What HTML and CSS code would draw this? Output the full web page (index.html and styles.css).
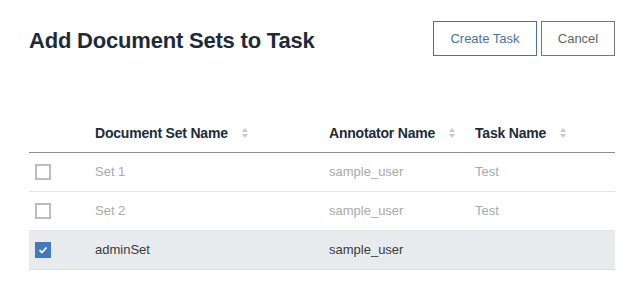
FILE: index.html
```html
<!DOCTYPE html>
<html lang="en">
<head>
    <meta charset="UTF-8">
    <title>Add Document Sets to Task</title>
    <link rel="stylesheet" href="styles.css">
</head>
<body>
    <div class="dialog">
        <div class="dialog-header">
            <h1>Add Document Sets to Task</h1>
            <div class="actions">
                <button class="btn btn-primary">Create Task</button>
                <button class="btn btn-secondary">Cancel</button>
            </div>
        </div>

        <table class="sets-table">
            <thead>
                <tr>
                    <th class="col-check"></th>
                    <th class="col-name"><span>Document Set Name</span><i class="sort"></i></th>
                    <th class="col-annotator"><span>Annotator Name</span><i class="sort"></i></th>
                    <th class="col-task"><span>Task Name</span><i class="sort"></i></th>
                </tr>
            </thead>
            <tbody>
                <tr class="muted">
                    <td><span class="checkbox"></span></td>
                    <td>Set 1</td>
                    <td>sample_user</td>
                    <td>Test</td>
                </tr>
                <tr class="muted">
                    <td><span class="checkbox"></span></td>
                    <td>Set 2</td>
                    <td>sample_user</td>
                    <td>Test</td>
                </tr>
                <tr class="selected">
                    <td>
                        <span class="checkbox checked">
                            <svg width="10" height="8" viewBox="0 0 10 8"><path d="M1.5 4.2 L4 6.5 L8.5 1.5" fill="none" stroke="#fff" stroke-width="1.8"/></svg>
                        </span>
                    </td>
                    <td>adminSet</td>
                    <td>sample_user</td>
                    <td></td>
                </tr>
            </tbody>
        </table>
    </div>
</body>
</html>
```

FILE: styles.css
```css
* {
    margin: 0;
    padding: 0;
    box-sizing: border-box;
}

body {
    font-family: "Liberation Sans", Arial, sans-serif;
    background: #fff;
    color: #152935;
}

.dialog {
    padding: 21px 28px 0 29px;
}

.dialog-header {
    display: flex;
    justify-content: space-between;
    align-items: flex-start;
}

h1 {
    font-size: 22px;
    font-weight: 600;
    color: #1c2b39;
    margin-top: 7px;
    letter-spacing: -0.2px;
}

.actions {
    display: flex;
    gap: 4px;
}

.btn {
    height: 35px;
    background: #fff;
    font-family: "Liberation Sans", Arial, sans-serif;
    font-size: 13px;
    padding: 0 12px;
    cursor: pointer;
}

.btn-primary {
    width: 104px;
    border: 1px solid #4672a8;
    color: #4672a8;
}

.btn-secondary {
    width: 74px;
    border: 1px solid #777;
    color: #666;
}

.sets-table {
    width: 100%;
    margin-top: 57px;
    border-collapse: collapse;
    font-size: 13px;
}

.sets-table th {
    text-align: left;
    font-size: 14px;
    font-weight: 700;
    color: #1c2b39;
    height: 39px;
    border-bottom: 1px solid #8e8e8e;
    white-space: nowrap;
    vertical-align: middle;
    letter-spacing: -0.2px;
}

.sets-table th span {
    display: inline-block;
    vertical-align: middle;
}

.sort {
    display: inline-block;
    vertical-align: middle;
    width: 7px;
    height: 10px;
    margin-left: 14px;
    position: relative;
}

.sort::before,
.sort::after {
    content: "";
    position: absolute;
    left: 0;
    border-left: 3.5px solid transparent;
    border-right: 3.5px solid transparent;
}

.sort::before {
    top: 0;
    border-bottom: 4px solid #c8c8c8;
}

.sort::after {
    bottom: 0;
    border-top: 4px solid #c8c8c8;
}

.col-check { width: 66px; }
.col-name { width: 234px; }
.col-annotator { width: 146px; }

.sets-table td {
    height: 39px;
    border-bottom: 1px solid #e2e4e6;
    vertical-align: middle;
    color: #3a3a3a;
}

.sets-table td:first-child {
    padding-left: 6px;
}

.muted td {
    color: #a9a9a9;
}

.selected td {
    background: #e8ebed;
    border-bottom-color: #dcdfe2;
}

.checkbox {
    display: flex;
    align-items: center;
    justify-content: center;
    width: 16px;
    height: 16px;
    border: 2px solid #bdbdbd;
    background: #fff;
}

.checkbox.checked {
    background: #4178be;
    border-color: #4178be;
}
```
